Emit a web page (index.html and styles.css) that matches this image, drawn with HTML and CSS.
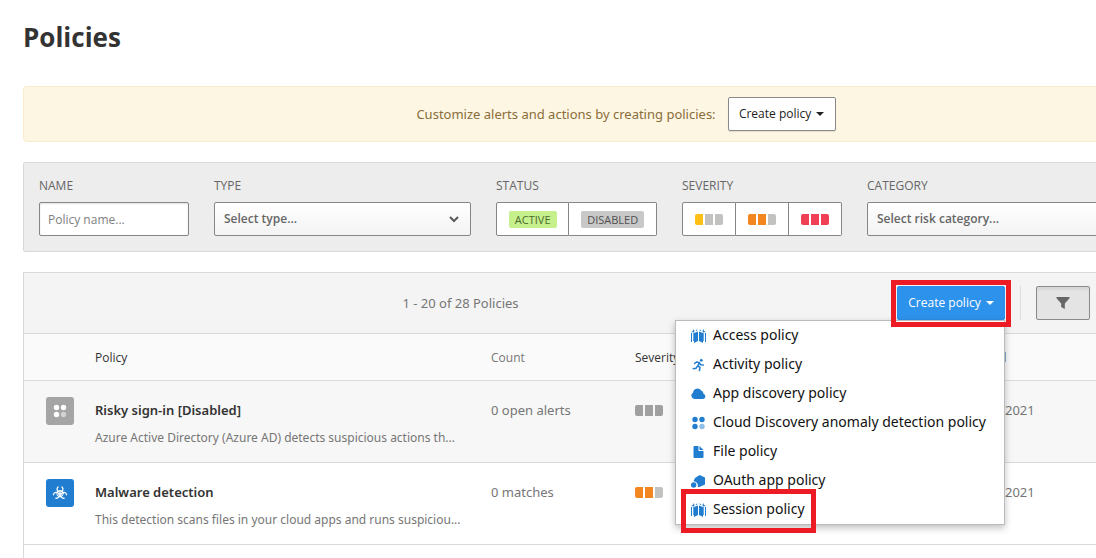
FILE: index.html
```html
<!DOCTYPE html>
<html lang="en">
<head>
<meta charset="utf-8">
<title>Policies</title>
<link rel="stylesheet" href="styles.css">
</head>
<body>
<svg class="sprite" aria-hidden="true">
  <symbol id="i-gate" viewBox="0 0 15 14"><path d="M0 3 2 2 2.500 0 3.500 2 3 3.500zM15 3 13 2 12.500 0 11.500 2 12 3.500zM4.500 1.500 6.500.3 6 2zM10.500 1.500 8.500.3 9 2z"/><path d="M0 4h1v9H0zM14 4h1v9h-1z"/><path d="M2 4h1v8H2zM12 4h1v8h-1z" opacity=".7"/><path d="M3 4 7 2.500V12l-4 2zM12 4 8 2.500V12l4 2z"/></symbol>
  <symbol id="i-run" viewBox="0 0 16 16"><circle cx="11.200" cy="2.700" r="1.600"/><path d="M3.500 6.300 6 4.500l3 .8L7.200 9l2.500 1.700-.6 3.600M9 5.300l1.500 2.400 3 .2M6.600 9.500 5.300 11.600 2 12.200" fill="none" stroke="currentColor" stroke-width="1.700" stroke-linecap="round" stroke-linejoin="round"/></symbol>
  <symbol id="i-cloud" viewBox="0 0 15 14"><path d="M3.600 12A3.400 3.400 0 0 1 2 5.700 4.500 4.500 0 0 1 10.200 3.600a3.300 3.300 0 0 1 2.300 3.200 2.700 2.700 0 0 1-.3 5.200z"/></symbol>
  <symbol id="i-dots" viewBox="0 0 14 14"><circle cx="3.500" cy="3.500" r="2.700"/><circle cx="10.500" cy="3.500" r="2.700"/><circle cx="3.500" cy="10.500" r="2.700"/><circle cx="10.500" cy="10.500" r="2.700" opacity=".5"/></symbol>
  <symbol id="i-file" viewBox="0 0 14 14"><path d="M3 1h4v5h5v6a1 1 0 0 1-1 1H3a1 1 0 0 1-1-1V2a1 1 0 0 1 1-1zM8 1l4 4H8z"/></symbol>
  <symbol id="i-oauth" viewBox="0 0 15 14"><path d="M4 4 8.500 1 14 3.500v7L8.500 13H6.800a4.600 4.600 0 0 0-4.300-5.800z"/><circle cx="2.700" cy="11" r="2.700"/></symbol>
  <symbol id="i-bio" viewBox="0 0 18 16"><g fill="none" stroke="currentColor" stroke-width="1.500" stroke-linecap="round"><path d="M6.700 1.200C4.800 3 5.400 6.800 9 6.800s4.200-3.800 2.300-5.600M1.500 9.800C2 7.300 5.800 6 7.600 9s-.9 5.300-3.300 5M16.500 9.800C16 7.300 12.200 6 10.400 9s.9 5.300 3.300 5"/><circle cx="9" cy="8.700" r="3.700" stroke-width="1"/></g><circle cx="9" cy="8.800" r="1.300"/></symbol>
  <symbol id="i-funnel" viewBox="0 0 14 14"><path d="M.5 1h13v1.200L8.800 7.500V13L5.200 11V7.500L.5 2.200z"/></symbol>
</svg>
<main class="page">
  <h1 class="title">Policies</h1>

  <section class="banner">
    <span>Customize alerts and actions by creating policies:</span>
    <button class="btn" type="button">Create policy <i class="caret"></i></button>
  </section>

  <form class="filters">
    <div class="field field-name">
      <label for="name">NAME</label>
      <input class="control" id="name" type="text" placeholder="Policy name...">
    </div>
    <div class="field field-type">
      <label for="type">TYPE</label>
      <div class="select">
        <select class="control" id="type"><option>Select type...</option></select>
        <svg class="chevron" viewBox="0 0 10 8"><path d="M1 2l4 4 4-4"/></svg>
      </div>
    </div>
    <div class="field field-status">
      <span class="label">STATUS</span>
      <div class="group">
        <button type="button"><span class="tag tag-active">ACTIVE</span></button>
        <button type="button"><span class="tag">DISABLED</span></button>
      </div>
    </div>
    <div class="field">
      <span class="label">SEVERITY</span>
      <div class="group">
        <button type="button" aria-label="Low"><span class="sev low"><i></i><i></i><i></i></span></button>
        <button type="button" aria-label="Medium"><span class="sev medium"><i></i><i></i><i></i></span></button>
        <button type="button" aria-label="High"><span class="sev high"><i></i><i></i><i></i></span></button>
      </div>
    </div>
    <div class="field field-category">
      <label for="category">CATEGORY</label>
      <div class="select">
        <select class="control" id="category"><option>Select risk category...</option></select>
      </div>
    </div>
  </form>

  <section class="panel">
    <div class="toolbar">
      <div class="total">1 - 20 of 28 Policies</div>
      <div class="dropdown">
        <button class="btn btn-primary" type="button">Create policy <i class="caret"></i></button>
        <ul class="menu">
          <li><a href="#"><svg><use href="#i-gate"/></svg>Access policy</a></li>
          <li><a href="#"><svg><use href="#i-run"/></svg>Activity policy</a></li>
          <li><a href="#"><svg><use href="#i-cloud"/></svg>App discovery policy</a></li>
          <li><a href="#"><svg><use href="#i-dots"/></svg>Cloud Discovery anomaly detection policy</a></li>
          <li><a href="#"><svg><use href="#i-file"/></svg>File policy</a></li>
          <li><a href="#"><svg><use href="#i-oauth"/></svg>OAuth app policy</a></li>
          <li class="marked"><a href="#"><svg><use href="#i-gate"/></svg>Session policy</a></li>
        </ul>
      </div>
      <button class="filter-btn" type="button" aria-label="Filters"><svg><use href="#i-funnel"/></svg></button>
    </div>
    <table class="table">
      <colgroup><col class="c-icon"><col class="c-policy"><col class="c-count"><col class="c-sev"><col></colgroup>
      <thead>
        <tr><th></th><th>Policy</th><th class="muted">Count</th><th>Severity</th><th class="muted">Modified</th></tr>
      </thead>
      <tbody>
        <tr class="off">
          <td><span class="badge"><svg><use href="#i-dots"/></svg></span></td>
          <td><div class="name">Risky sign-in [Disabled]</div><div class="desc">Azure Active Directory (Azure AD) detects suspicious actions th...</div></td>
          <td>0 open alerts</td>
          <td><span class="sev none"><i></i><i></i><i></i></span></td>
          <td class="date">2021</td>
        </tr>
        <tr>
          <td><span class="badge badge-blue"><svg><use href="#i-bio"/></svg></span></td>
          <td><div class="name">Malware detection</div><div class="desc">This detection scans files in your cloud apps and runs suspiciou...</div></td>
          <td>0 matches</td>
          <td><span class="sev medium"><i></i><i></i><i></i></span></td>
          <td class="date">2021</td>
        </tr>
      </tbody>
    </table>
  </section>
</main>
</body>
</html>
```
FILE: styles.css
```css
* { box-sizing: border-box; }

body {
  margin: 0;
  overflow: hidden;
  background: #fff;
  color: #767676;
  font: 13px/20px "Noto Sans", "Open Sans", sans-serif;
}

button, input, select { font: inherit; color: inherit; }

.sprite { display: none; }

svg { fill: currentColor; }

/* The content is wider than the window and runs off its right edge. */
.page {
  display: flex;
  flex-direction: column;
  width: calc(100% + 133px);
  height: 100vh;
  padding: 19px 0 0 23px;
}

.title {
  margin: 0 0 31px;
  color: #333;
  font-family: "Open Sans", sans-serif;
  font-size: 26px;
  line-height: 36px;
  font-weight: 700;
}

.banner {
  display: flex;
  align-items: center;
  justify-content: center;
  gap: 12px;
  padding: 10px;
  margin-bottom: 20px;
  border: 1px solid #faebcc;
  border-radius: 4px;
  background: #fdf6e2;
  color: #8a6d3b;
}

.btn {
  display: flex;
  align-items: center;
  justify-content: center;
  gap: 5px;
  width: 108px;
  height: 34px;
  padding: 0;
  border: 1px solid #8a8a8a;
  border-radius: 2px;
  background: #fff;
  color: #222;
  font-family: "Open Sans", sans-serif;
  font-size: 12px;
  line-height: 22px;
  white-space: nowrap;
  box-shadow: 0 1px 1px rgba(0, 0, 0, .1);
}

.caret {
  border: 4px solid transparent;
  border-top-color: currentColor;
  border-bottom: 0;
}

.filters {
  display: flex;
  gap: 25px;
  padding: 14px 15px 15px;
  margin-bottom: 20px;
  border: 1px solid #d9d9d9;
  border-radius: 2px;
  background: #ededed;
  font-family: "Open Sans", sans-serif;
}

.field {
  display: flex;
  flex-direction: column;
  gap: 7px;
}

.field label, .label {
  color: #666;
  font-size: 12px;
  line-height: 18px;
  font-weight: 500;
}

.field-name { width: 150px; }
.field-type { width: 257px; }
.field-status { width: 161px; }
.field-category { flex: 1; }

.control {
  width: 100%;
  height: 34px;
  padding: 0 9px;
  border: 1px solid #868686;
  border-radius: 2px;
  background: #fff;
  font-size: 12px;
}

input.control { padding: 0 8px; box-shadow: inset 0 1px 2px rgba(0, 0, 0, .12); }
input.control::placeholder { color: #808080; }

select.control {
  appearance: none;
  background: linear-gradient(#fff, #f3f3f3);
  color: #666;
  font-weight: 600;
}

.select { position: relative; }

.chevron {
  position: absolute;
  right: 12px;
  top: 13px;
  width: 10px;
  height: 8px;
  fill: none;
  stroke: #5a5a5a;
  stroke-width: 2;
}

.group { display: flex; }

.group button {
  display: flex;
  align-items: center;
  justify-content: center;
  height: 34px;
  padding: 0 12px;
  border: 1px solid #868686;
  background: #fff;
}

.field-status button { flex: auto; padding: 0 11px; }

.group button + button { border-left: 0; }
.group button:first-child { border-radius: 2px 0 0 2px; }
.group button:last-child { border-radius: 0 2px 2px 0; }

.tag {
  padding: 0 6px;
  border-radius: 2px;
  background: #c8c8c8;
  color: #505050;
  font-size: 11px;
  line-height: 17px;
  font-weight: 500;
}

.tag-active { background: #c5f08c; color: #4e6b30; }

.sev { display: inline-flex; gap: 2px; }
.sev i { width: 8px; height: 11px; background: #c2c2c0; }
.sev i:first-child { border-radius: 2px 0 0 2px; }
.sev i:last-child { border-radius: 0 2px 2px 0; }
.sev.low i:first-child { background: #fcc016; }
.sev.medium i:not(:last-child) { background: #f28722; }
.sev.high i { background: #f04056; }
.sev.none i { background: #a0a0a0; }

.panel {
  flex: 1;
  border: 1px solid #d9d9d9;
  border-bottom: 0;
}

.toolbar {
  display: flex;
  align-items: center;
  height: 61px;
  padding-right: 138px;
  border-bottom: 1px solid #d9d9d9;
  background: #f4f4f4;
}

.total { flex: 1; text-align: center; }

.dropdown {
  position: relative;
  padding-right: 15px;
  border-right: 1px solid #dcdcdc;
}

.btn-primary {
  border-color: #2b90ea;
  background: #2d92ec;
  color: #fff;
}

/* Callout frames around the trigger and the chosen entry */
.dropdown::after, .marked::after {
  content: "";
  position: absolute;
  border: 5px solid #ed1c24;
  pointer-events: none;
}

.dropdown::after { inset: -6px 9px -7px -6px; z-index: 3; }
.marked::after { inset: -6px 188px -9px 5px; }

.menu {
  position: absolute;
  top: 100%;
  right: 15px;
  z-index: 2;
  width: 330px;
  margin: 0;
  padding: 0;
  border: 1px solid #bbb;
  background: #fff;
  box-shadow: 0 3px 7px rgba(0, 0, 0, .25);
  list-style: none;
}

.menu li { position: relative; }

.menu a {
  display: flex;
  align-items: center;
  gap: 7px;
  height: 29px;
  padding: 0 0 2px 15px;
  color: #111;
  font-size: 14px;
  text-decoration: none;
  white-space: nowrap;
}

.menu svg { width: 15px; height: 14px; margin-top: 3px; color: #217dd0; }

.filter-btn {
  display: flex;
  align-items: center;
  justify-content: center;
  width: 54px;
  height: 34px;
  margin-left: 15px;
  border: 1px solid #8a8a8a;
  border-radius: 2px;
  background: #e4e4e4;
  box-shadow: inset 0 3px 2px rgba(0, 0, 0, .05);
}

.filter-btn svg { width: 14px; height: 14px; color: #666; }

.table {
  width: 100%;
  table-layout: fixed;
  border-collapse: separate;
  border-spacing: 0;
}

.c-icon { width: 61px; }
.c-policy { width: 396px; }
.c-count { width: 144px; }
.c-sev { width: 322px; }

th {
  height: 47px;
  padding: 1px 10px 0;
  border-bottom: 1px solid #dcdcdc;
  background: #fafafa;
  color: #333;
  font-family: "Open Sans", sans-serif;
  font-size: 12px;
  font-weight: 500;
  text-align: left;
}

th.muted { color: #767676; }

td {
  height: 82px;
  padding: 19px 10px 0;
  border-bottom: 1px solid #d9d9d9;
  vertical-align: top;
}

td:first-child { padding: 16px 0 0 22px; }
td.date { padding-left: 58px; }
td .sev { padding-top: 5px; }
.off td { background: #f7f7f7; }

.name { color: #333; font-weight: 600; }

.desc {
  padding-top: 8px;
  font-size: 12px;
  white-space: nowrap;
}

.badge {
  display: flex;
  align-items: center;
  justify-content: center;
  width: 28px;
  height: 28px;
  border-radius: 3px;
  background: #a5a5a5;
  color: #fff;
}

.badge svg { width: 14px; height: 14px; }
.badge-blue { background: #217dd0; }
.badge-blue svg { width: 16px; }
```
